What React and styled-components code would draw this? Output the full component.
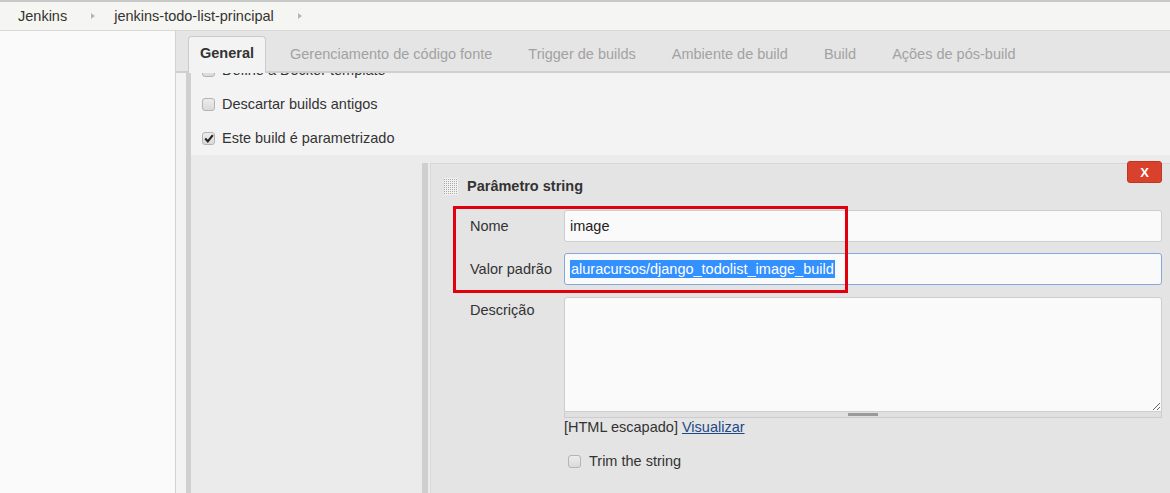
import React from "react";
import styled, { createGlobalStyle } from "styled-components";

const Global = createGlobalStyle`
  html, body { margin: 0; padding: 0; }
  body {
    font-family: "Liberation Sans", Arial, sans-serif;
    font-size: 14.5px;
    line-height: 17px;
    color: #333;
    background: #fafafa;
  }
  * { box-sizing: border-box; }
`;

const Page = styled.div`
  display: flex;
  flex-direction: column;
  height: 493px;
  overflow: hidden;
`;

const Breadcrumbs = styled.div`
  display: flex;
  align-items: center;
  height: 31px;
  padding-left: 18px;
  background: #f5f6f1;
  border-top: 2px solid #c9c9c9;
  border-bottom: 1px solid #d8d8d8;
  color: #333;
`;

const Crumb = styled.span`
  line-height: 17px;
`;

const CrumbArrow = styled.span`
  display: inline-block;
  width: 0;
  height: 0;
  margin: 0 19px 0 24px;
  border-top: 3px solid transparent;
  border-bottom: 3px solid transparent;
  border-left: 4px solid #b8b8b8;
`;

const Body = styled.div`
  flex: 1;
  display: flex;
  min-height: 0;
`;

const Sidebar = styled.div`
  width: 176px;
  flex: none;
  background: #fafafa;
  border-right: 1px solid #d2d2d2;
`;

const Main = styled.div`
  flex: 1;
  display: flex;
  flex-direction: column;
  min-width: 0;
`;

const TabBar = styled.div`
  position: relative;
  z-index: 2;
  display: flex;
  align-items: flex-end;
  gap: 12px;
  height: 42px;
  padding-left: 12px;
  background: #e5e5e5;
  border-bottom: 2px solid #cfcfcf;
`;

const Tab = styled.div`
  height: ${(p) => (p.$active ? "37px" : "34px")};
  margin-bottom: ${(p) => (p.$active ? "-2px" : "0")};
  padding: 0 11px;
  display: flex;
  align-items: center;
  padding-bottom: ${(p) => (p.$active ? "3px" : "0")};
  font-weight: ${(p) => (p.$active ? "bold" : "normal")};
  color: ${(p) => (p.$active ? "#333" : "#a2a2a2")};
  background: ${(p) => (p.$active ? "#f3f3f3" : "transparent")};
  border: ${(p) => (p.$active ? "1px solid #cacaca" : "1px solid transparent")};
  border-bottom: none;
  border-radius: 4px 4px 0 0;
  white-space: nowrap;
`;

const Content = styled.div`
  flex: 1;
  min-height: 0;
  overflow: hidden;
  background: #f3f3f3;
  padding-left: 10px;
  display: flex;
`;

const Section = styled.div`
  flex: 1;
  min-width: 0;
  border-left: 5px solid #d0d0d0;
  display: flex;
  flex-direction: column;
`;

const Row = styled.div`
  flex: none;
  height: 34px;
  display: flex;
  align-items: center;
  gap: 7px;
  padding-left: 11px;
  margin-top: ${(p) => (p.$offset ? p.$offset : "0")};
  color: #333;
`;

const Box = styled.span`
  width: 13px;
  height: 13px;
  flex: none;
  display: inline-flex;
  align-items: center;
  justify-content: center;
  border: 1px solid #b4b4b4;
  border-radius: 3px;
  background: linear-gradient(#ececec, #dadada);
`;

const Check = ({ checked }) => (
  <Box>
    {checked && (
      <svg width="10" height="9" viewBox="0 0 10 9">
        <path d="M1.2 4.6 L3.8 7.3 L8.8 1.2" fill="none" stroke="#222" strokeWidth="2.1" />
      </svg>
    )}
  </Box>
);

const Nested = styled.div`
  flex: 1;
  background: #ebebeb;
  padding: 8px 0 0 231px;
  display: flex;
`;

const ParamWrap = styled.div`
  flex: 1;
  border-left: 6px solid #cfcfcf;
  padding-left: 2px;
  display: flex;
`;

const ParamBox = styled.div`
  position: relative;
  flex: 1;
  background: #e4e4e4;
  border-top: 1px solid #d6d6d6;
  border-left: 1px solid #d9d9d9;
`;

const CloseButton = styled.div`
  position: absolute;
  top: -3px;
  right: 8px;
  width: 35px;
  height: 22px;
  display: flex;
  align-items: center;
  justify-content: center;
  background: #d9412d;
  border: 1px solid #c23522;
  border-radius: 3px;
  color: #fff;
  font-weight: bold;
  font-size: 13px;
`;

const Header = styled.div`
  display: flex;
  align-items: center;
  gap: 9px;
  padding: 13px 0 0 13px;
  height: 31px;
  font-weight: bold;
  color: #333;
`;

const Handle = () => (
  <svg width="14" height="17" viewBox="0 0 14 17">
    <rect width="14" height="17" fill="#f2f2f2" />
    {Array.from({ length: 8 }).map((_, r) =>
      Array.from({ length: 7 }).map((__, c) => (
        <rect key={`${r}-${c}`} x={c * 2} y={r * 2 + 1} width="1" height="1" fill="#a8a8a8" />
      ))
    )}
  </svg>
);

const Form = styled.div`
  display: grid;
  grid-template-columns: 94px 1fr;
  row-gap: 11px;
  padding: 15px 8px 0 39px;
`;

const Label = styled.div`
  align-self: ${(p) => (p.$top ? "start" : "center")};
  padding-top: ${(p) => (p.$top ? "6px" : "0")};
  color: #333;
`;

const Field = styled.div`
  height: 32px;
  display: flex;
  align-items: center;
  padding-left: 5px;
  background: #fafafa;
  border: 1px solid ${(p) => (p.$focus ? "#86a8d8" : "#cdcdcd")};
  border-radius: 3px;
  color: #222;
`;

const Selected = styled.span`
  background: #3390ff;
  color: #fff;
  line-height: 18px;
  padding: 0 1px;
`;

const AreaCell = styled.div`
  display: flex;
  flex-direction: column;
  margin-top: 1px;
`;

const TextArea = styled.textarea`
  display: block;
  width: 100%;
  height: 115px;
  margin: 0;
  background: #fafafa;
  border: 1px solid #cdcdcd;
  border-radius: 3px 3px 0 0;
  resize: vertical;
  font-family: inherit;
  font-size: 13px;
`;

const Grippie = styled.div`
  height: 6px;
  display: flex;
  align-items: center;
  justify-content: center;
  background: #e0e0e0;
  border: 1px solid #cdcdcd;
  border-top: none;
`;

const GrippieThumb = styled.span`
  width: 30px;
  height: 3px;
  background: #9a9a9a;
`;

const Help = styled.div`
  padding-top: 1px;
  line-height: 17px;
  color: #333;
`;

const Link = styled.a`
  color: #204a87;
  text-decoration: underline;
`;

const TrimRow = styled.div`
  display: flex;
  align-items: center;
  gap: 8px;
  padding: 17px 0 0 4px;
  color: #333;
`;

const Annotation = styled.div`
  position: absolute;
  left: 22px;
  top: 42px;
  width: 395px;
  height: 87px;
  border: 3px solid #e3000e;
  pointer-events: none;
`;

export default function App() {
  const tabs = [
    "General",
    "Gerenciamento de código fonte",
    "Trigger de builds",
    "Ambiente de build",
    "Build",
    "Ações de pós-build",
  ];
  return (
    <>
      <Global />
      <Page>
        <Breadcrumbs>
          <Crumb>Jenkins</Crumb>
          <CrumbArrow />
          <Crumb>jenkins-todo-list-principal</Crumb>
          <CrumbArrow />
        </Breadcrumbs>
        <Body>
          <Sidebar />
          <Main>
            <TabBar>
              {tabs.map((t, i) => (
                <Tab key={t} $active={i === 0}>
                  {t}
                </Tab>
              ))}
            </TabBar>
            <Content>
              <Section>
                <Row $offset="-20px">
                  <Check />
                  <span>Define a Docker template</span>
                </Row>
                <Row>
                  <Check />
                  <span>Descartar builds antigos</span>
                </Row>
                <Row>
                  <Check checked />
                  <span>Este build é parametrizado</span>
                </Row>
                <Nested>
                  <ParamWrap>
                    <ParamBox>
                      <CloseButton>X</CloseButton>
                      <Header>
                        <Handle />
                        <span>Parâmetro string</span>
                      </Header>
                      <Form>
                        <Label>Nome</Label>
                        <Field>image</Field>
                        <Label>Valor padrão</Label>
                        <Field $focus>
                          <Selected>aluracursos/django_todolist_image_build</Selected>
                        </Field>
                        <Label $top>Descrição</Label>
                        <AreaCell>
                          <TextArea defaultValue="" />
                          <Grippie>
                            <GrippieThumb />
                          </Grippie>
                          <Help>
                            [HTML escapado] <Link href="#">Visualizar</Link>
                          </Help>
                          <TrimRow>
                            <Check />
                            <span>Trim the string</span>
                          </TrimRow>
                        </AreaCell>
                      </Form>
                      <Annotation />
                    </ParamBox>
                  </ParamWrap>
                </Nested>
              </Section>
            </Content>
          </Main>
        </Body>
      </Page>
    </>
  );
}
